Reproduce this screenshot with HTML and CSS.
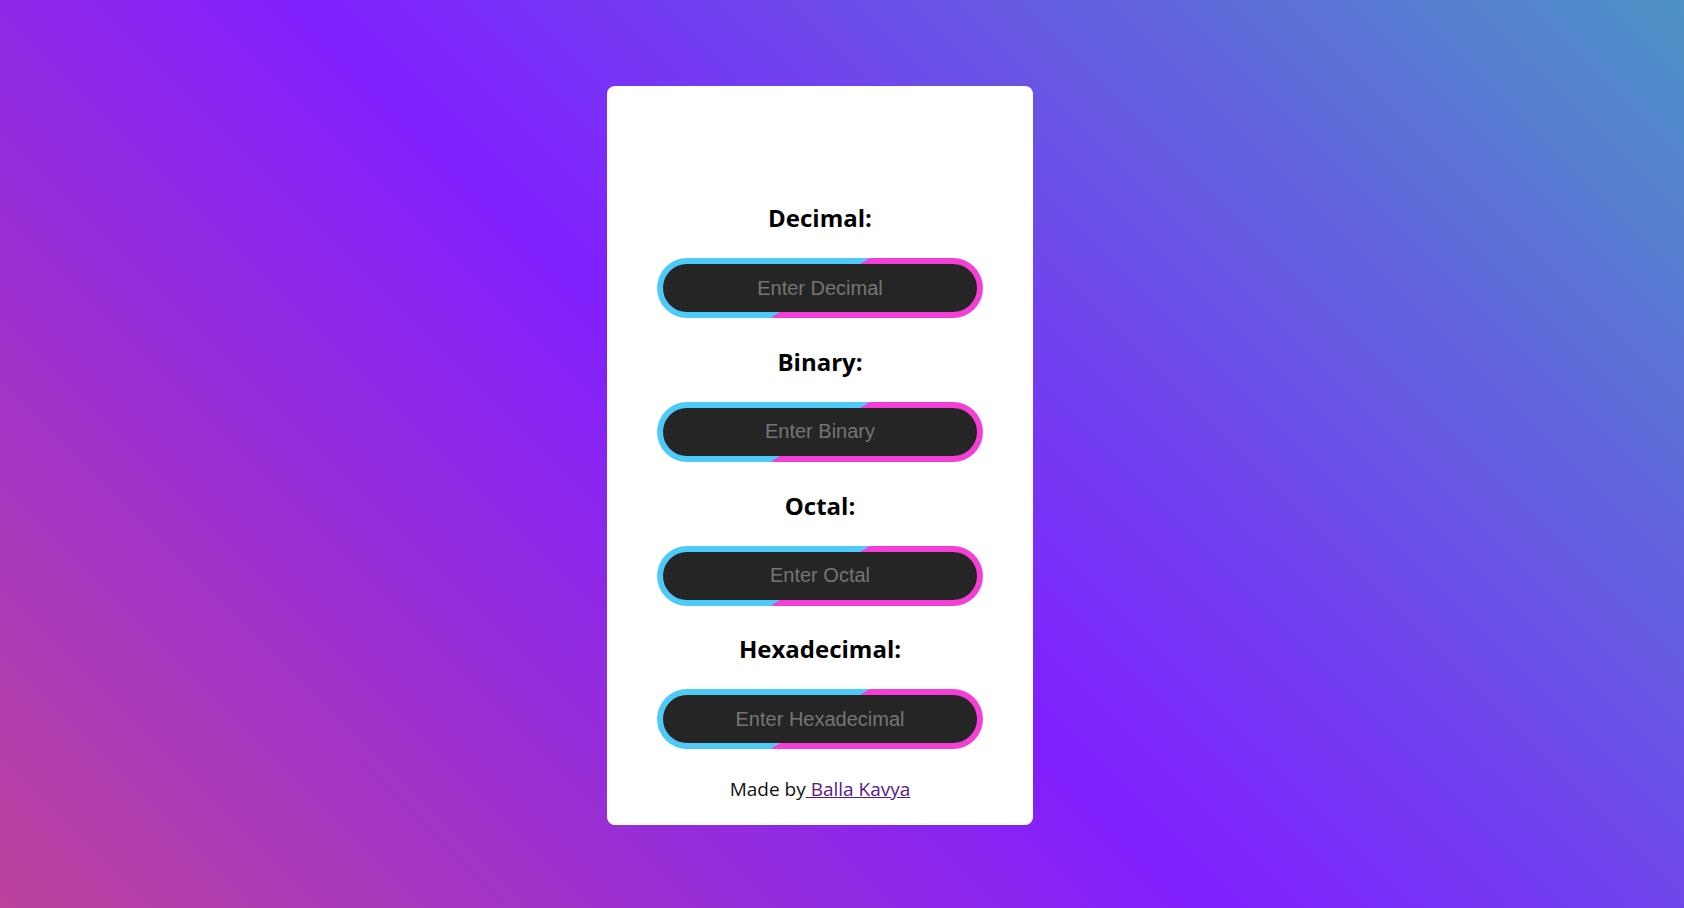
FILE: index.html
```html
<!DOCTYPE html>
<html lang="en">
<head>
<meta charset="UTF-8">
<title>Number Converter</title>
<link rel="stylesheet" href="styles.css">
</head>
<body>
  <main class="card">
    <div class="group">
      <label class="label" for="dec">Decimal:</label>
      <div class="field"><input id="dec" class="input" type="text" placeholder="Enter Decimal"></div>
    </div>
    <div class="group">
      <label class="label" for="bin">Binary:</label>
      <div class="field"><input id="bin" class="input" type="text" placeholder="Enter Binary"></div>
    </div>
    <div class="group">
      <label class="label" for="oct">Octal:</label>
      <div class="field"><input id="oct" class="input" type="text" placeholder="Enter Octal"></div>
    </div>
    <div class="group">
      <label class="label" for="hex">Hexadecimal:</label>
      <div class="field"><input id="hex" class="input" type="text" placeholder="Enter Hexadecimal"></div>
    </div>
    <p class="credit">Made by<a class="credit-link" href="#"> Balla Kavya</a></p>
  </main>
</body>
</html>
```

FILE: styles.css
```css
html, body {
  margin: 0;
  padding: 0;
  height: 100%;
}

body {
  display: flex;
  align-items: center;
  justify-content: center;
  padding: 3px 44px 0 0;
  box-sizing: border-box;
  background: linear-gradient(45deg, #bb439c 0%, #801fff 47%, #4d93c6 100%);
  font-family: "Open Sans", "Noto Sans", sans-serif;
}

.card {
  width: 426px;
  box-sizing: border-box;
  padding: 116px 50px 24px;
  background: #ffffff;
  border-radius: 8px;
  display: flex;
  flex-direction: column;
  align-items: center;
}

.group {
  display: flex;
  flex-direction: column;
  align-items: center;
  margin-bottom: 27.7px;
}

.label {
  display: block;
  font-size: 24px;
  line-height: 32px;
  font-weight: 700;
  color: #000;
  margin-bottom: 24px;
}

.field {
  width: 326px;
  height: 60px;
  box-sizing: border-box;
  padding: 6px;
  border-radius: 30px;
  background: linear-gradient(149deg, #4fc9f6 50%, #f33fd6 50%);
}

.input {
  display: block;
  width: 100%;
  height: 48px;
  box-sizing: border-box;
  border: none;
  outline: none;
  border-radius: 24px;
  background: #252525;
  color: #ffffff;
  text-align: center;
  font-family: "Liberation Sans", Arial, sans-serif;
  font-size: 20px;
  padding: 0 16px;
}

.input::placeholder {
  color: #757575;
  opacity: 1;
}

.credit {
  margin: 0;
  font-size: 19px;
  line-height: 24px;
  color: #111;
}

.credit-link {
  color: #551a8b;
  text-decoration: underline;
}
```
